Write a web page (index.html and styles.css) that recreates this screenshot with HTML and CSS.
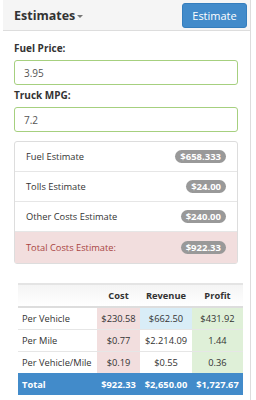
FILE: index.html
```html
<!DOCTYPE html>
<html lang="en">
<head>
  <meta charset="UTF-8">
  <title>Estimates</title>
  <link rel="stylesheet" href="styles.css">
</head>
<body>

  <!-- Estimates panel -->
  <div class="panel">
    <div class="panel-heading">
      <span class="panel-title">Estimates<span class="caret"></span></span>
      <button class="btn-estimate">Estimate</button>
    </div>

    <div class="panel-body">
      <label class="field-label">Fuel Price:</label>
      <input class="field-input" type="text" value="3.95">
      <label class="field-label">Truck MPG:</label>
      <input class="field-input" type="text" value="7.2">

      <ul class="list-group">
        <li class="list-item">Fuel Estimate <span class="badge">$658.333</span></li>
        <li class="list-item">Tolls Estimate <span class="badge">$24.00</span></li>
        <li class="list-item">Other Costs Estimate <span class="badge">$240.00</span></li>
        <li class="list-item danger">Total Costs Estimate: <span class="badge">$922.33</span></li>
      </ul>

      <table class="summary">
        <thead>
          <tr>
            <th></th>
            <th>Cost</th>
            <th>Revenue</th>
            <th>Profit</th>
          </tr>
        </thead>
        <tbody>
          <tr>
            <td class="row-label">Per Vehicle</td>
            <td class="danger">$230.58</td>
            <td class="info">$662.50</td>
            <td class="success">$431.92</td>
          </tr>
          <tr>
            <td class="row-label">Per Mile</td>
            <td class="danger">$0.77</td>
            <td>$2.214.09</td>
            <td class="success">1.44</td>
          </tr>
          <tr>
            <td class="row-label">Per Vehicle/Mile</td>
            <td class="danger">$0.19</td>
            <td>$0.55</td>
            <td class="success">0.36</td>
          </tr>
          <tr class="total">
            <td class="row-label">Total</td>
            <td>$922.33</td>
            <td>$2,650.00</td>
            <td>$1,727.67</td>
          </tr>
        </tbody>
      </table>
    </div>
  </div>

</body>
</html>
```

FILE: styles.css
```css
* { margin: 0; padding: 0; box-sizing: border-box; }
body {
  font-family: 'Open Sans', 'Liberation Sans', sans-serif;
  background: #fff;
  color: #333;
  width: 256px;
  height: 400px;
  overflow: hidden;
}
.panel {
  margin-left: 3px;
  width: 248px;
  height: 400px;
  border-right: 1px solid #ddd;
  background: #fff;
}
.panel-heading {
  height: 31px;
  display: flex;
  align-items: center;
  justify-content: space-between;
  padding: 0 3px 0 11px;
  background: #f5f5f5;
  border-bottom: 1px solid #ddd;
}
.panel-title {
  font-size: 12.5px;
  font-weight: 700;
  color: #333;
  display: flex;
  align-items: center;
}
.caret {
  display: inline-block;
  margin-left: 2px;
  margin-top: 2px;
  border-top: 3px solid #777;
  border-left: 3px solid transparent;
  border-right: 3px solid transparent;
}
.btn-estimate {
  width: 65px;
  height: 25px;
  background: #428bca;
  border: 1px solid #357ebd;
  border-radius: 3px;
  color: #fff;
  font-family: inherit;
  font-size: 11px;
}
.panel-body { padding: 10px 11px 0 11px; }
.field-label {
  display: block;
  font-size: 10px;
  font-weight: 700;
  line-height: 14px;
  color: #333;
}
.field-label + .field-input { margin-top: 5px; }
.field-input {
  display: block;
  width: 224px;
  height: 25px;
  padding: 0 9px;
  border: 1px solid #a6d07f;
  border-radius: 3px;
  font-family: inherit;
  font-size: 10px;
  color: #555;
  margin-bottom: 3px;
}
.list-group {
  list-style: none;
  width: 224px;
  margin-top: 9px;
  border: 1px solid #ddd;
  border-radius: 3px;
}
.list-item {
  height: 30px;
  padding: 0 11px;
  display: flex;
  align-items: center;
  justify-content: space-between;
  font-size: 9.3px;
  color: #333;
  border-bottom: 1px solid #e6e6e6;
}
.list-item:last-child { border-bottom: none; height: 31px; }
.list-item.danger { background: #f2dede; color: #a94442; }
.badge {
  background: #999;
  color: #fff;
  font-size: 9.5px;
  font-weight: 700;
  line-height: 13px;
  padding: 0 5px;
  border-radius: 7px;
}
.summary {
  margin: 19px 0 0 4px;
  width: 225px;
  border-collapse: collapse;
  font-size: 9.3px;
}
.summary th {
  height: 23px;
  font-weight: 700;
  color: #333;
  text-align: center;
  background: linear-gradient(#f4f4f4, #fff);
  border-top: 2px solid #e4e4e4;
  border-bottom: 2px solid #ddd;
}
.summary td {
  height: 22px;
  text-align: center;
  color: #333;
  border-top: 1px solid #e6e6e6;
}
.summary th:nth-child(1), .summary td:nth-child(1) { width: 79px; }
.summary th:nth-child(2), .summary td:nth-child(2) { width: 43px; }
.summary th:nth-child(3), .summary td:nth-child(3) { width: 52px; }
.summary td.row-label { text-align: left; padding-left: 4px; }
.summary td.danger { background: #f2dede; }
.summary td.info { background: #d9edf7; }
.summary td.success { background: #dff0d8; }
.summary tr.total td {
  background: #428bca;
  color: #fff;
  font-weight: 700;
  border-top: none;
}
```
